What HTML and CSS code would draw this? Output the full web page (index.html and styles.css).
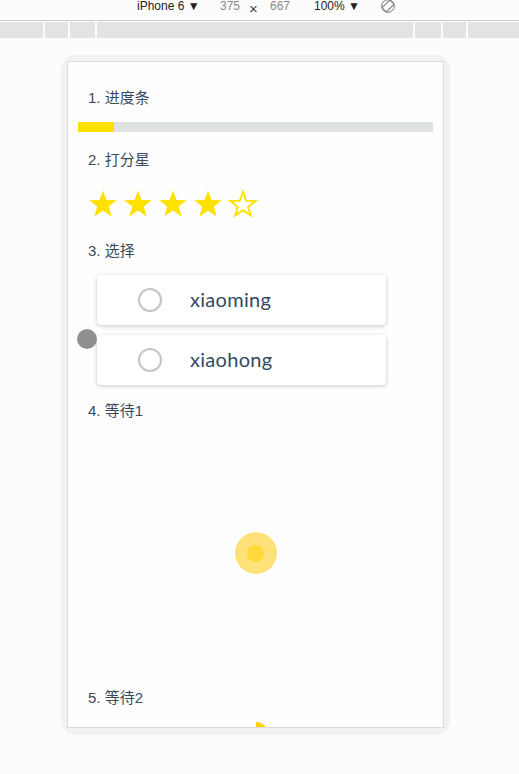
FILE: index.html
```html
<!DOCTYPE html>
<html lang="zh-CN">
<head>
<meta charset="utf-8">
<title>Demo</title>
<link rel="stylesheet" href="styles.css">
</head>
<body>
<div class="toolbar">
  <span class="tb-device">iPhone 6 ▼</span>
  <span class="tb-dim">375</span>
  <span class="tb-x">×</span>
  <span class="tb-dim">667</span>
  <span class="tb-zoom">100% ▼</span>
  <span class="tb-rotate">
    <svg width="16" height="15" viewBox="0 0 16 15">
      <circle cx="8" cy="7" r="6.3" fill="none" stroke="#777" stroke-width="1"/>
      <rect x="5" y="1.5" width="6" height="11" rx="1.2" fill="#fff" stroke="#777" stroke-width="1" transform="rotate(45 8 7)"/>
    </svg>
  </span>
</div>
<div class="ruler">
  <span class="seg s1"></span><span class="seg s2"></span><span class="seg s3"></span><span class="seg s4"></span><span class="seg s5"></span><span class="seg s6"></span><span class="seg s7"></span>
</div>
<div class="stage">
  <div class="device">
    <div class="screen">
      <div class="title t1">1. 进度条</div>
      <div class="progress"><div class="progress-fill" style="width:36px"></div></div>

      <div class="title t2">2. 打分星</div>
      <div class="stars">
        <svg class="star" viewBox="0 0 30 30"><polygon points="15,1.5 18.6,11 28.8,11.2 20.8,17.5 23.6,27.4 15,21.6 6.4,27.4 9.2,17.5 1.2,11.2 11.4,11" fill="#ffe100"/></svg>
        <svg class="star" viewBox="0 0 30 30"><polygon points="15,1.5 18.6,11 28.8,11.2 20.8,17.5 23.6,27.4 15,21.6 6.4,27.4 9.2,17.5 1.2,11.2 11.4,11" fill="#ffe100"/></svg>
        <svg class="star" viewBox="0 0 30 30"><polygon points="15,1.5 18.6,11 28.8,11.2 20.8,17.5 23.6,27.4 15,21.6 6.4,27.4 9.2,17.5 1.2,11.2 11.4,11" fill="#ffe100"/></svg>
        <svg class="star" viewBox="0 0 30 30"><polygon points="15,1.5 18.6,11 28.8,11.2 20.8,17.5 23.6,27.4 15,21.6 6.4,27.4 9.2,17.5 1.2,11.2 11.4,11" fill="#ffe100"/></svg>
        <svg class="star" viewBox="0 0 30 30"><polygon points="15,2.8 18.2,11.8 27.6,12 20.2,17.8 22.8,26.4 15,21.1 7.2,26.4 9.8,17.8 2.4,12 11.8,11.8" fill="none" stroke="#ffe100" stroke-width="1.9" stroke-linejoin="miter"/></svg>
      </div>

      <div class="title t3">3. 选择</div>
      <div class="options">
        <div class="option"><span class="radio"></span><span class="opt-label">xiaoming</span></div>
        <div class="option"><span class="radio"></span><span class="opt-label">xiaohong</span></div>
      </div>

      <div class="title t4">4. 等待1</div>
      <div class="wait">
        <div class="spinner"><div class="spinner-core"></div></div>
      </div>

      <div class="title t5">5. 等待2</div>
      <div class="wait2"><div class="arc"></div></div>
    </div>
  </div>
  <div class="touch-cursor"></div>
</div>
</body>
</html>
```
FILE: styles.css
```css
html, body {
  margin: 0;
  padding: 0;
}
body {
  background: #fcfcfc;
  font-family: "Liberation Sans", "Noto Sans CJK SC", sans-serif;
  width: 519px;
  height: 774px;
  overflow: hidden;
}
.toolbar {
  height: 21px;
  border-bottom: 1px solid #cbcbcb;
  display: grid;
  grid-template-columns: 83px 29px 21px 44px 66px auto;
  padding-left: 137px;
  font-size: 12px;
  line-height: 13px;
  color: #222;
  box-sizing: border-box;
}
.tb-dim { color: #8a8a8a; }
.tb-x { color: #444; font-size: 15px; line-height: 17px; }
.tb-rotate { margin-top: -1px; }
.ruler {
  margin-top: 1px;
  height: 16px;
  display: flex;
  gap: 2px;
}
.seg { background: #e3e3e3; height: 16px; }
.s1 { width: 43px; }
.s2 { width: 23px; }
.s3 { width: 25px; }
.s4 { width: 316px; }
.s5 { width: 26px; }
.s6 { width: 23px; }
.s7 { width: 51px; }

.stage {
  position: relative;
  padding-top: 17px;
}
.device {
  margin-left: 61px;
  width: 389px;
  height: 680px;
  background: #f2f2f2;
  border-radius: 14px;
  padding: 6px 6px 7px 6px;
  box-sizing: border-box;
}
.screen {
  width: 377px;
  height: 667px;
  border: 1px solid #dcdcdc;
  box-sizing: border-box;
  background: #fefefe;
  overflow: hidden;
  padding-top: 26px;
  color: #2c3e50;
}
.title {
  font-size: 15px;
  line-height: 20px;
  padding-left: 20px;
  color: #3a4a5c;
}
.progress {
  margin: 14px 10px 0 10px;
  height: 10px;
  background: #dfe4e3;
}
.progress-fill {
  height: 10px;
  background: #ffe100;
}
.t2 { margin-top: 18px; }
.stars {
  margin-top: 19px;
  padding-left: 20px;
  display: flex;
  gap: 5px;
  height: 30px;
}
.star { width: 30px; height: 30px; display: block; }
.t3 { margin-top: 22px; }
.options {
  margin-top: 14px;
  padding-left: 29px;
  display: flex;
  flex-direction: column;
  gap: 10px;
}
.option {
  width: 289px;
  height: 50px;
  background: #fff;
  border-radius: 4px;
  box-shadow: 0 1px 4px rgba(0, 0, 0, 0.22);
  display: flex;
  align-items: center;
  box-sizing: border-box;
  padding-left: 41px;
}
.radio {
  width: 24px;
  height: 24px;
  border: 2px solid #c6c6c6;
  border-radius: 50%;
  box-sizing: border-box;
  flex: none;
}
.opt-label {
  margin-left: 28px;
  margin-top: -3px;
  font-family: Lato, "Liberation Sans", sans-serif;
  font-size: 20px;
  line-height: 24px;
  color: #34495e;
  letter-spacing: 0.3px;
}
.t4 { margin-top: 16px; }
.wait {
  height: 264px;
  display: flex;
  align-items: center;
  justify-content: center;
}
.spinner {
  width: 42px;
  height: 42px;
  border-radius: 50%;
  background: #ffe17a;
  display: flex;
  align-items: center;
  justify-content: center;
}
.spinner-core {
  width: 17px;
  height: 17px;
  border-radius: 50%;
  background: #ffd83a;
}
.t5 { margin-top: 3px; }
.wait2 {
  margin-top: 14px;
  display: flex;
  justify-content: center;
}
.arc {
  width: 24px;
  height: 24px;
  position: relative;
}
.arc::after {
  content: "";
  position: absolute;
  left: 12px;
  top: 0;
  width: 12px;
  height: 12px;
  background: #ffd400;
  border-top-right-radius: 12px;
}
.touch-cursor {
  position: absolute;
  left: 77px;
  top: 291px;
  width: 20px;
  height: 20px;
  border-radius: 50%;
  background: #8f8f8f;
}
```
